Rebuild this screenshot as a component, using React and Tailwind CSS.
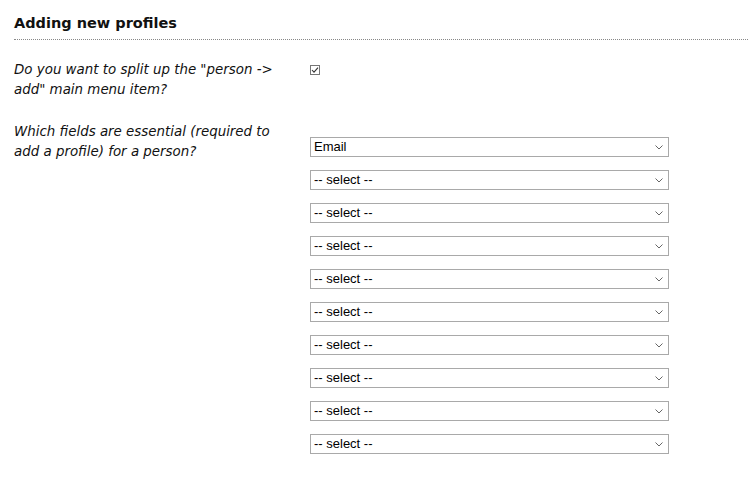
import React from 'react';

const extraSelects = Array.from({ length: 9 });

function FieldSelect({ value }) {
  return (
    <div className="relative w-[359px] h-[20px]">
      <select
        defaultValue={value}
        className="appearance-none block w-full h-full border border-[#a9a9a9] bg-white pl-[3px] pr-6 text-[13px] leading-[18px] text-black font-['Liberation_Sans',Arial,sans-serif] outline-none"
      >
        <option value="">-- select --</option>
        <option value="email">Email</option>
        <option value="phone">Phone</option>
        <option value="address">Address</option>
      </select>
      <svg
        className="pointer-events-none block absolute right-[6px] top-[8px]"
        width="8"
        height="5"
        viewBox="0 0 8 5"
        fill="none"
      >
        <path d="M0.5 0.5L4 4L7.5 0.5" stroke="#666" strokeWidth="1" />
      </svg>
    </div>
  );
}

export default function App() {
  return (
    <div className="bg-white min-h-[500px] w-[750px] font-['DejaVu_Sans',Verdana,sans-serif] text-[#111]">
      <div className="pl-[14px] pr-[2px]">
        <h1 className="pt-[13px] pb-[6px] text-[14.5px] font-bold leading-[20px] border-b border-dotted border-[#888]">
          Adding new profiles
        </h1>

        {/* split menu item */}
        <div className="flex mt-[20px]">
          <div className="w-[296px] pr-[30px] text-[13.4px] italic leading-[20px]">
            Do you want to split up the "person -&gt; add" main menu item?
          </div>
          <div className="pt-[5px]">
            <svg width="10" height="10" viewBox="0 0 10 10" className="block">
              <rect x="0.5" y="0.5" width="9" height="9" fill="#fff" stroke="#767676" />
              <path d="M2 5L4 7.2L8 2.6" fill="none" stroke="#333" strokeWidth="1.1" />
            </svg>
          </div>
        </div>

        {/* essential fields */}
        <div className="flex mt-[22px]">
          <div className="w-[296px] pr-[30px] text-[13.4px] italic leading-[20px]">
            Which fields are essential (required to add a profile) for a person?
          </div>
          <div className="flex flex-col gap-[13px] pt-[15px]">
            <FieldSelect value="email" />
            {extraSelects.map((_, i) => (
              <FieldSelect key={i} value="" />
            ))}
          </div>
        </div>
      </div>
    </div>
  );
}
